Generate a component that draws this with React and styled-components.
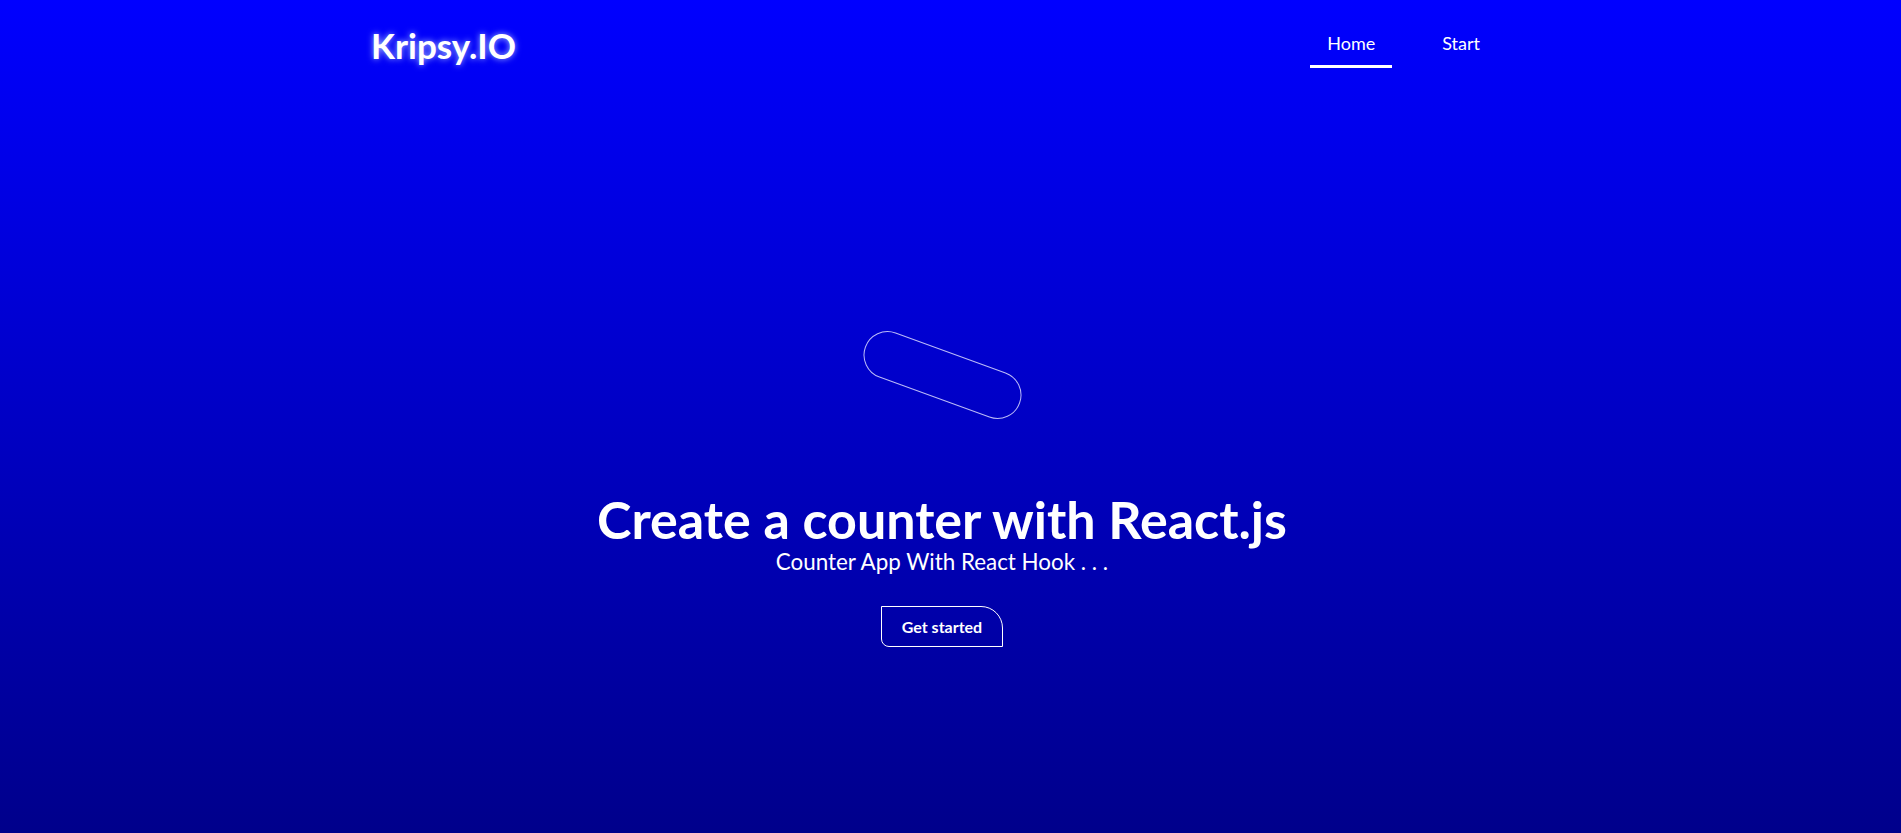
import styled, { createGlobalStyle } from "styled-components";

const GlobalStyle = createGlobalStyle`
  html, body {
    margin: 0;
    padding: 0;
    height: 100%;
  }
  body {
    font-family: "Lato", "Liberation Sans", sans-serif;
    background: linear-gradient(to bottom, #0000ff, #00008b);
    color: #fff;
    overflow: hidden;
  }
`;

const Page = styled.div`
  min-height: 100vh;
  margin-right: 17px;
`;

const Header = styled.header`
  width: 1140px;
  margin: 0 auto;
  padding-top: 21px;
  display: flex;
  align-items: center;
  justify-content: space-between;
`;

const Logo = styled.a`
  margin-left: -1px;
  font-size: 35px;
  font-weight: 700;
  color: #fff;
  text-decoration: none;
  text-shadow: 0 0 6px rgba(190, 210, 255, 0.9);
`;

const Nav = styled.nav`
  display: flex;
  gap: 33px;
  margin-right: 15px;
`;

const NavLink = styled.a`
  font-size: 18px;
  color: #fff;
  text-decoration: none;
  padding: 11px 17px 11px;
  border-bottom: 3px solid ${(props) => (props.active ? "#fff" : "transparent")};
`;

const Hero = styled.main`
  display: flex;
  flex-direction: column;
  align-items: center;
  padding-top: 283px;
`;

const Pill = styled.div`
  width: 165px;
  height: 48px;
  box-sizing: border-box;
  border: 1px solid rgba(220, 220, 255, 0.85);
  border-radius: 24px;
  transform: rotate(20deg);
  margin-bottom: 89px;
`;

const Title = styled.h1`
  margin: 0;
  font-size: 52px;
  font-weight: 700;
  line-height: normal;
`;

const Subtitle = styled.p`
  margin: -2px 0 0;
  font-size: 22.4px;
  line-height: normal;
`;

const StartButton = styled.button`
  margin-top: 31px;
  font-family: inherit;
  font-size: 16px;
  font-weight: 700;
  color: #fff;
  background: transparent;
  border: 1px solid #fff;
  border-radius: 0 22px 0 8px;
  padding: 10px 20px;
  line-height: 19px;
  cursor: pointer;
`;

export default function App() {
  return (
    <>
      <GlobalStyle />
      <Page>
        <Header>
          <Logo href="#">Kripsy.IO</Logo>
          <Nav>
            <NavLink href="#" active>
              Home
            </NavLink>
            <NavLink href="#">Start</NavLink>
          </Nav>
        </Header>
        <Hero>
          <Pill />
          <Title>Create a counter with React.js</Title>
          <Subtitle>Counter App With React Hook . . .</Subtitle>
          <StartButton>Get started</StartButton>
        </Hero>
      </Page>
    </>
  );
}
